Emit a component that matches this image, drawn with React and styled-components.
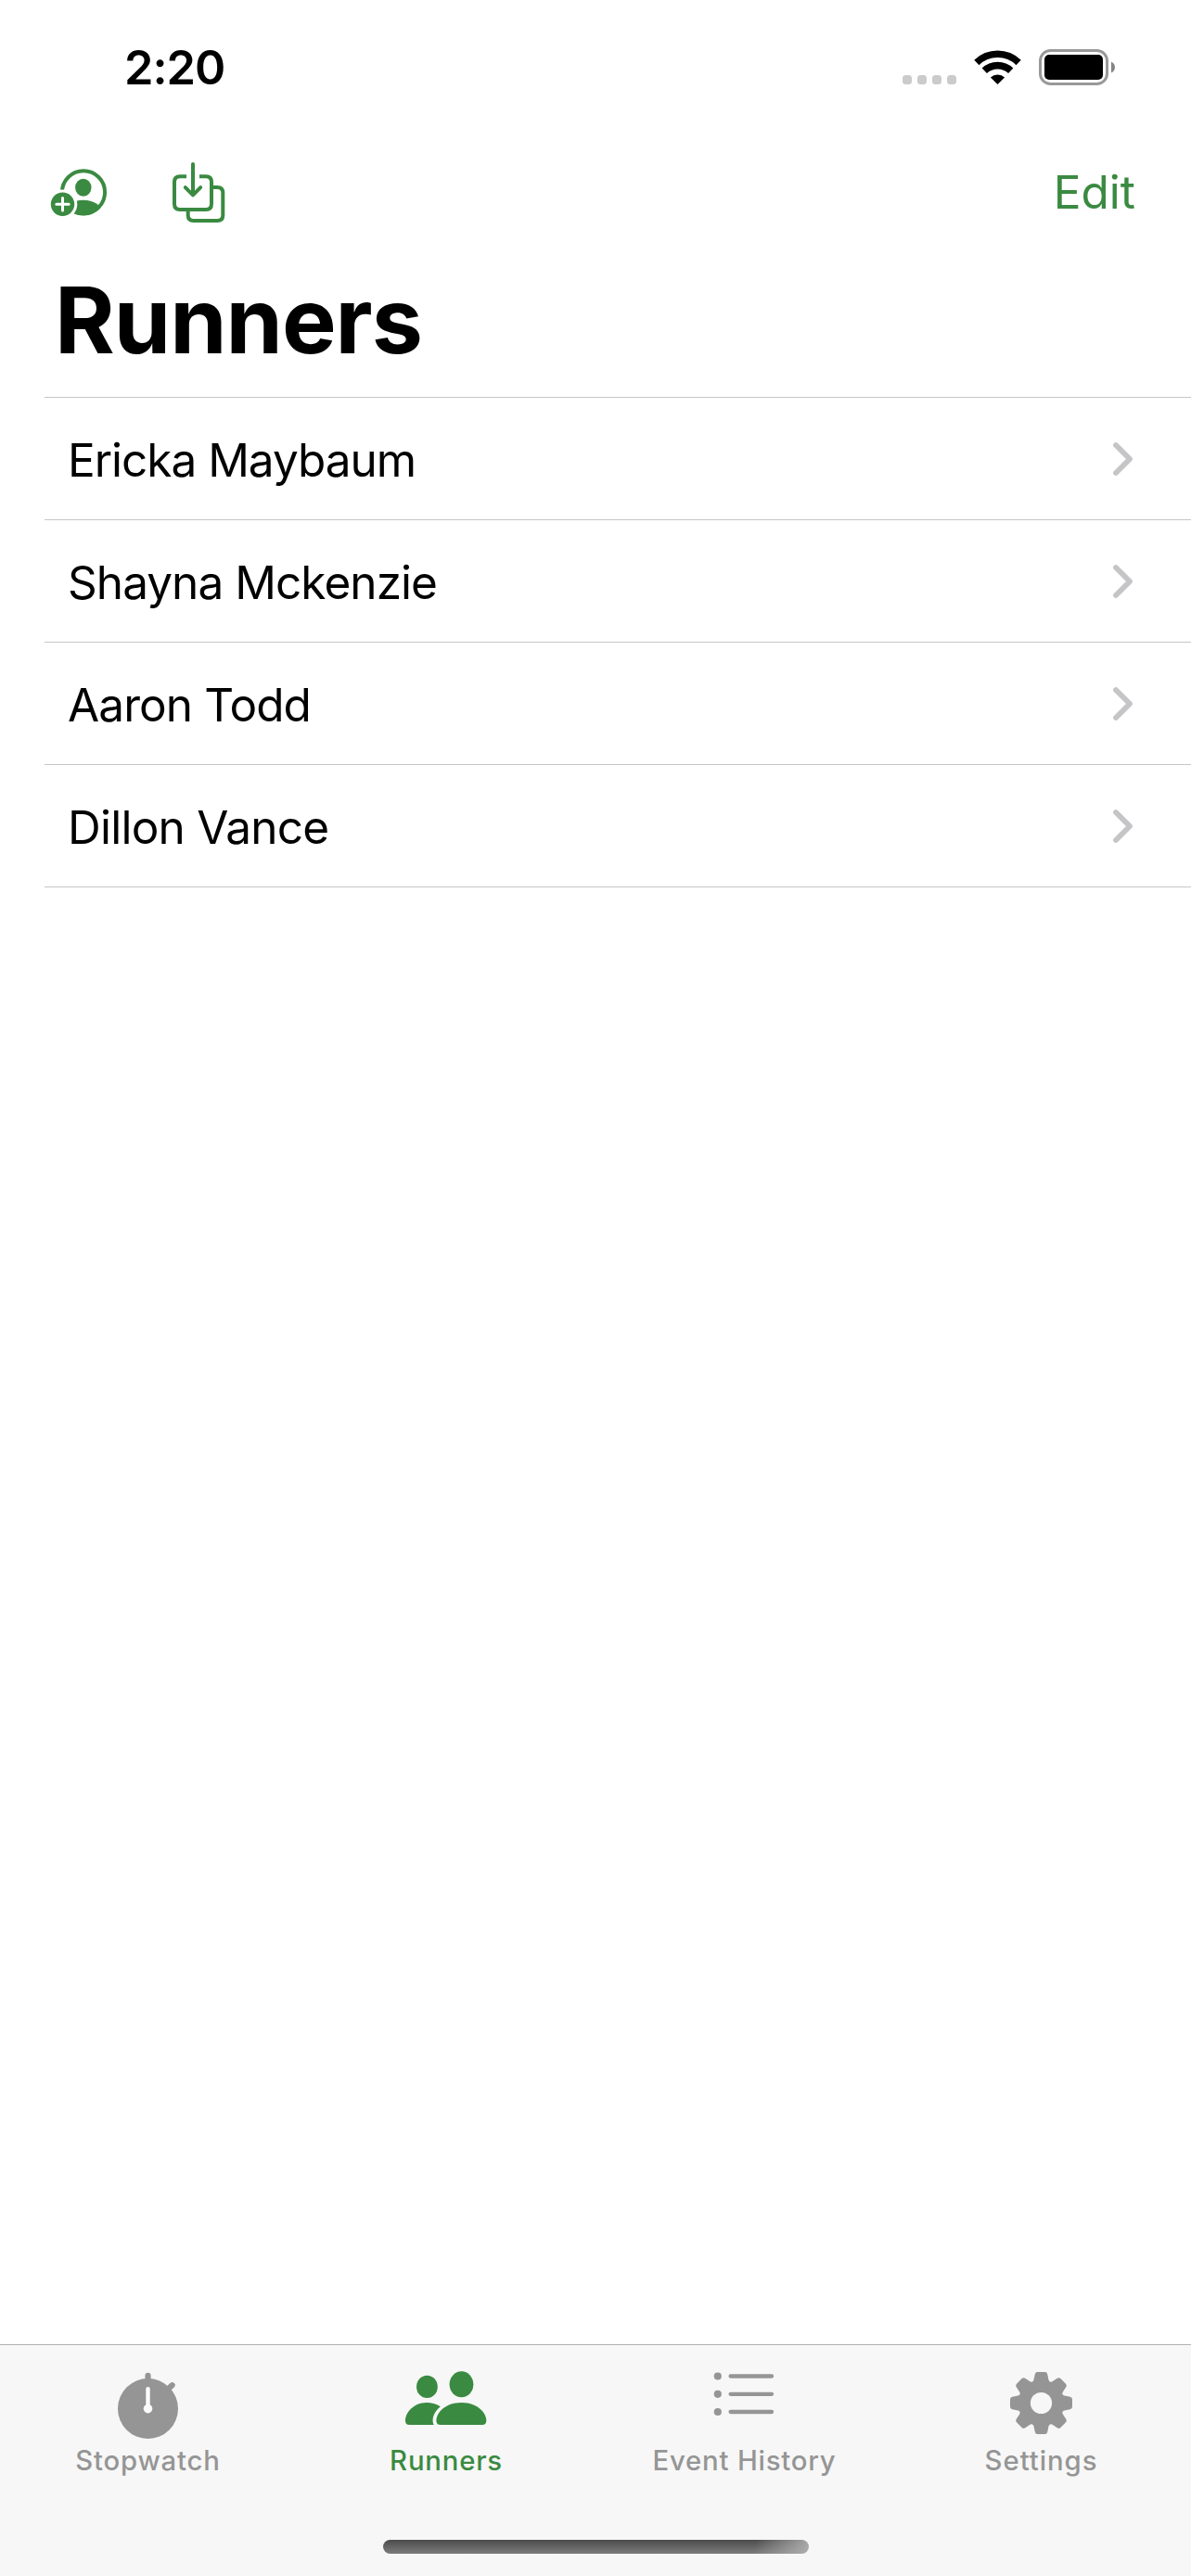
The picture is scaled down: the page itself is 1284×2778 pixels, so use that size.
import React from "react";
import styled, { createGlobalStyle } from "styled-components";

const GREEN = "#3a8a41";
const GRAY = "#959595";

const GlobalStyle = createGlobalStyle`
  * { box-sizing: border-box; }
  body { margin: 0; background: #fff; }
`;

const Screen = styled.div`
  display: flex;
  flex-direction: column;
  width: 1284px;
  height: 2778px;
  overflow: hidden;
  background: #fff;
  color: #000;
  font-family: Inter, "Liberation Sans", sans-serif;
  svg { display: block; flex: none; }
`;

const StatusBar = styled.header`
  display: flex;
  justify-content: space-between;
  align-items: center;
  height: 141px;
  padding: 4px 82px 0 134px;
`;

const Time = styled.time`
  font-size: 50.5px;
  line-height: 60px;
  font-weight: 600;
  letter-spacing: ${(p) => p.$tracking}px;
`;

const StatusIcons = styled.div`
  display: flex;
  align-items: flex-end;
  height: 39px;
`;

const Cellular = styled.div`
  display: flex;
  gap: 6px;
  margin: 0 19px 1px 0;
`;

const Dot = styled.span`
  width: 10px;
  height: 10px;
  border-radius: 3.5px;
  background: #cbcbcb;
`;

const IconSpacer = styled.span`
  width: 18px;
`;

const NavBar = styled.nav`
  display: flex;
  align-items: center;
  height: 132px;
  padding: 0 60px 0 54px;
`;

const IconButton = styled.button`
  display: flex;
  padding: 0;
  border: 0;
  background: none;
  color: ${GREEN};
  margin-top: ${(p) => p.$drop || 0}px;
  margin-right: ${(p) => p.$gap || 0}px;
`;

const EditButton = styled.button`
  margin-left: auto;
  padding: 0;
  border: 0;
  background: none;
  color: ${GREEN};
  font: 400 49.5px/60px Inter, "Liberation Sans", sans-serif;
  letter-spacing: ${(p) => p.$tracking}px;
`;

const Title = styled.h1`
  margin: 0;
  height: 155px;
  padding: 12px 0 0 59px;
  font-size: 98.6px;
  line-height: 120px;
  font-weight: 700;
  letter-spacing: ${(p) => p.$tracking}px;
`;

const List = styled.ul`
  margin: 0 0 0 48px;
  padding: 0;
  list-style: none;
  border-top: 1px solid #c6c6c8;
`;

const Row = styled.li`
  display: flex;
  align-items: center;
  justify-content: space-between;
  height: 132px;
  padding: 1px 62px 0 25px;
  border-bottom: 1px solid #c6c6c8;
`;

const Name = styled.span`
  padding-top: 1px;
  font-size: 49.5px;
  line-height: 60px;
  letter-spacing: ${(p) => p.$tracking}px;
`;

const TabBar = styled.footer`
  display: flex;
  flex-direction: column;
  align-items: center;
  justify-content: space-between;
  height: 250px;
  margin-top: auto;
  padding-bottom: 24px;
  border-top: 1px solid #b2b2b2;
  background: #f7f7f7;
`;

const Tabs = styled.div`
  display: grid;
  grid-template-columns: 319px 324px 319px 321px;
  width: 1284px;
`;

const Tab = styled.div`
  display: flex;
  flex-direction: column;
  align-items: center;
  padding-top: 21px;
  color: ${(p) => (p.$active ? GREEN : GRAY)};
`;

const TabLabel = styled.span`
  margin-top: 2px;
  font-size: 29.3px;
  line-height: 36px;
  font-weight: 500;
  letter-spacing: ${(p) => p.$tracking}px;
`;

const HomeIndicator = styled.div`
  width: 459px;
  height: 15px;
  border-radius: 8px;
  background:
    linear-gradient(100deg, rgba(180, 180, 180, 0) 87%, rgba(180, 180, 180, 0.9) 100%),
    linear-gradient(#4b4b4b, #7c7c7c);
`;

const WifiIcon = () => (
  <svg width="52" height="39" viewBox="1050 53 52 39">
    <g fill="none" stroke="#000" strokeWidth="7.6">
      <path d="M1052.9 67.4A32.5 32.5 0 0 1 1098.1 67.4" />
      <path d="M1061.3 76.3A20.5 20.5 0 0 1 1089.7 76.3" />
    </g>
    <path d="M1075.5 91L1067.9 83.4A11.4 11.4 0 0 1 1083.1 83.4Z" />
  </svg>
);

const BatteryIcon = () => (
  <svg width="82" height="39" viewBox="1120 53 82 39">
    <rect x="1121.5" y="54.5" width="72" height="36" rx="11" fill="none" stroke="#999" strokeWidth="3" />
    <rect x="1126" y="59" width="63" height="27" rx="5" />
    <path d="M1198 66.5Q1202 68.5 1202 72.5T1198 78.5Z" fill="#858585" />
  </svg>
);

const AddPersonIcon = () => (
  <svg width="62" height="66" viewBox="54 174 62 66">
    <defs>
      <mask id="badge-cut" maskUnits="userSpaceOnUse" x="50" y="170" width="80" height="80">
        <rect x="50" y="170" width="80" height="80" fill="#fff" />
        <circle cx="67.5" cy="220.3" r="15.8" fill="#000" />
      </mask>
      <clipPath id="person-clip">
        <circle cx="90" cy="207.3" r="25" />
      </clipPath>
    </defs>
    <g mask="url(#badge-cut)">
      <circle cx="90" cy="207.3" r="23.1" fill="none" stroke="currentColor" strokeWidth="4" />
      <ellipse cx="89.8" cy="202.3" rx="8.7" ry="9.5" fill="currentColor" />
      <ellipse cx="89.8" cy="228.5" rx="20" ry="12.8" fill="currentColor" clipPath="url(#person-clip)" />
    </g>
    <circle cx="67.5" cy="220.3" r="12.7" fill="currentColor" />
    <path d="M60.8 220.3H74.2M67.5 213.6V227" stroke="#fff" strokeWidth="3" strokeLinecap="round" />
  </svg>
);

const ImportIcon = () => (
  <svg width="60" height="66" viewBox="185 175 60 66">
    <g fill="none" stroke="currentColor" strokeWidth="4">
      <path d="M201 190.3H194Q188 190.3 188 196.3V220Q188 226 194 226H222Q228 226 228 220V196.3Q228 190.3 222 190.3H215" />
      <path d="M228 202H234.3Q240.3 202 240.3 208V232Q240.3 238 234.3 238H208.7Q202.7 238 202.7 232V226" />
      <path d="M208 177V210M199.8 202.2L208 210.3L216.2 202.2" strokeLinecap="round" strokeLinejoin="round" />
    </g>
  </svg>
);

const Chevron = () => (
  <svg width="22" height="38" viewBox="1200 476 22 38">
    <path d="M1203 480L1218 495L1203 510" fill="none" stroke="#c5c5c7" strokeWidth="5.8" strokeLinecap="round" strokeLinejoin="round" />
  </svg>
);

const StopwatchIcon = () => (
  <svg width="91" height="84" viewBox="114 2550 91 84">
    <circle cx="159.5" cy="2597.5" r="32.5" fill="currentColor" />
    <path d="M159.5 2561.8V2570M181 2576.6L185.6 2572.2" stroke="currentColor" strokeWidth="6.2" strokeLinecap="round" />
    <path d="M159.5 2576.2V2597" stroke="#fcfcfc" strokeWidth="4.4" strokeLinecap="round" />
    <circle cx="159.5" cy="2597.6" r="4.8" fill="#fcfcfc" />
  </svg>
);

const RunnersIcon = () => (
  <svg width="90" height="84" viewBox="436 2550 90 84">
    <g fill="currentColor">
      <ellipse cx="460.4" cy="2573.9" rx="11.4" ry="12.2" />
      <ellipse cx="497.5" cy="2571.3" rx="12.9" ry="14" />
      <path d="M474.8 2595.3C470 2592.3 465 2591 460 2591C446 2591 437 2602 437 2610.5Q437 2615 441.5 2615H467.7C465 2610 467 2601.5 474.8 2595.3Z" />
      <path d="M497.4 2591C480 2591 470.4 2602 470.4 2610.5Q470.4 2615 475 2615H519.7Q524.3 2615 524.3 2610.5C524.3 2602 514.8 2591 497.4 2591Z" />
    </g>
  </svg>
);

const HistoryIcon = () => (
  <svg width="91" height="84" viewBox="757 2550 91 84">
    {[2562.5, 2581.8, 2601].map((y) => (
      <g key={y}>
        <circle cx="773.8" cy={y} r="4.1" fill="currentColor" />
        <path d={`M787.6 ${y}H832`} stroke="currentColor" strokeWidth="4.3" strokeLinecap="round" />
      </g>
    ))}
  </svg>
);

const GearIcon = () => (
  <svg width="91" height="84" viewBox="-45.5 -41.5 91 84">
    <defs>
      <mask id="gear-hole" maskUnits="userSpaceOnUse" x="-40" y="-40" width="80" height="80">
        <rect x="-40" y="-40" width="80" height="80" fill="#fff" />
        <circle r="11.6" fill="#000" />
      </mask>
    </defs>
    <g fill="currentColor" mask="url(#gear-hole)">
      <circle r="24.8" />
      {[0, 45, 90, 135, 180, 225, 270, 315].map((angle) => (
        <path
          key={angle}
          transform={`rotate(${angle})`}
          d="M-11 -21.5Q-8.6 -22.5 -8 -25L-6.7 -31.2Q-6.2 -33.5 -4 -33.5H4Q6.2 -33.5 6.7 -31.2L8 -25Q8.6 -22.5 11 -21.5L0 -10Z"
        />
      ))}
    </g>
  </svg>
);

const runners = [
  { name: "Ericka Maybaum", tracking: -1.02 },
  { name: "Shayna Mckenzie", tracking: -0.95 },
  { name: "Aaron Todd", tracking: -0.9 },
  { name: "Dillon Vance", tracking: -0.75 },
];

const tabs = [
  { label: "Stopwatch", Icon: StopwatchIcon, tracking: 0.85 },
  { label: "Runners", Icon: RunnersIcon, tracking: 0.8, active: true },
  { label: "Event History", Icon: HistoryIcon, tracking: 0.8 },
  { label: "Settings", Icon: GearIcon, tracking: 0.95 },
];

export default function App() {
  return (
    <Screen>
      <GlobalStyle />
      <StatusBar>
        <Time $tracking={-1}>2:20</Time>
        <StatusIcons>
          <Cellular>
            <Dot />
            <Dot />
            <Dot />
            <Dot />
          </Cellular>
          <WifiIcon />
          <IconSpacer />
          <BatteryIcon />
        </StatusIcons>
      </StatusBar>
      <NavBar>
        <IconButton $gap={69} aria-label="Add runner">
          <AddPersonIcon />
        </IconButton>
        <IconButton $drop={2} aria-label="Import runners">
          <ImportIcon />
        </IconButton>
        <EditButton $tracking={0}>Edit</EditButton>
      </NavBar>
      <Title $tracking={-1}>Runners</Title>
      <List>
        {runners.map(({ name, tracking }) => (
          <Row key={name}>
            <Name $tracking={tracking}>{name}</Name>
            <Chevron />
          </Row>
        ))}
      </List>
      <TabBar>
        <Tabs>
          {tabs.map(({ label, Icon, tracking, active }) => (
            <Tab key={label} $active={active}>
              <Icon />
              <TabLabel $tracking={tracking}>{label}</TabLabel>
            </Tab>
          ))}
        </Tabs>
        <HomeIndicator />
      </TabBar>
    </Screen>
  );
}
